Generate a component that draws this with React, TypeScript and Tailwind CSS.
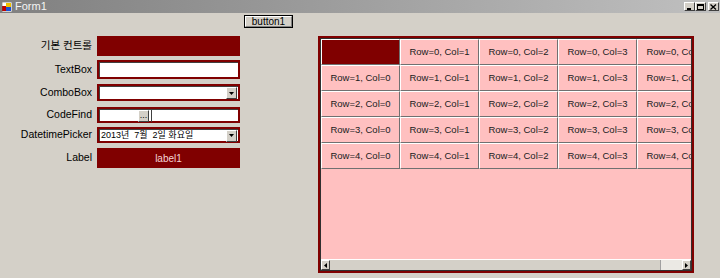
const font = "font-['Liberation_Sans','Noto_Sans_CJK_KR',sans-serif]"

const cols = [0, 1, 2, 3, 4]
const rows = [0, 1, 2, 3, 4]

function FormIcon() {
  return (
    <svg width="10" height="10" viewBox="0 0 10 10">
      <rect x="0" y="0" width="10" height="10" fill="#ffffff" />
      <rect x="0" y="4" width="4" height="5" fill="#c00000" />
      <rect x="4" y="1" width="5" height="4" fill="#f0c000" />
      <rect x="4" y="5" width="5" height="4" fill="#2050d0" />
      <rect x="0" y="0" width="10" height="10" fill="none" stroke="#606060" strokeWidth="0.6" />
    </svg>
  )
}

function CaptionButton({ kind }: { kind: 'min' | 'max' | 'close' }) {
  return (
    <div className="w-[11px] h-[9px] bg-[#d4d0c8] border-t border-l border-t-white border-l-white border-r border-b border-r-[#404040] border-b-[#404040] flex items-center justify-center">
      <svg width="7" height="6" viewBox="0 0 7 6">
        {kind === 'min' && <rect x="1" y="4" width="4" height="2" fill="#000" />}
        {kind === 'max' && (
          <>
            <rect x="0.5" y="0.5" width="6" height="5" fill="none" stroke="#000" />
            <rect x="0" y="0" width="7" height="2" fill="#000" />
          </>
        )}
        {kind === 'close' && <path d="M0.5 0.5 L6 5.5 M6 0.5 L0.5 5.5" stroke="#000" strokeWidth="1.3" />}
      </svg>
    </div>
  )
}

function DropButton() {
  return (
    <div className="w-[11px] h-[12px] bg-[#d4d0c8] border-t border-l border-t-white border-l-white border-r border-b border-r-[#404040] border-b-[#404040] flex items-center justify-center">
      <svg width="5" height="3" viewBox="0 0 5 3">
        <path d="M0 0 L5 0 L2.5 3 Z" fill="#000" />
      </svg>
    </div>
  )
}

function Field({ children, h }: { children?: React.ReactNode; h: string }) {
  return (
    <div className={`w-[143px] ${h} border-2 border-[#800000] bg-white`}>
      <div className="w-full h-full border-t border-l border-t-[#404040] border-l-[#404040] flex items-center">{children}</div>
    </div>
  )
}

function Label({ text, h, mt }: { text: string; h: string; mt: string }) {
  return (
    <div className={`flex items-center ${mt}`}>
      <div className={`w-[92px] ${h} flex items-center justify-end text-[10.5px] text-black`}>{text}</div>
    </div>
  )
}

export default function App() {
  return (
    <div className={`w-[720px] h-[278px] bg-[#d4d0c8] flex flex-col overflow-hidden ${font}`}>
      <div className="h-[13px] bg-gradient-to-r from-[#808080] to-[#c0c0c0] flex items-center pl-[2px] pr-[1px]">
        <FormIcon />
        <span className="ml-[3px] text-[11px] leading-none text-[#f4f4f4]">Form1</span>
        <div className="ml-auto flex items-center">
          <CaptionButton kind="min" />
          <CaptionButton kind="max" />
          <div className="w-[2px]" />
          <CaptionButton kind="close" />
        </div>
      </div>

      <div className="pl-[244px] pt-[2px]">
        <div className="w-[49px] h-[13px] border border-black bg-[#d4d0c8]">
          <div className="w-full h-full border-t border-l border-t-white border-l-white border-r border-b border-r-[#808080] border-b-[#808080] flex items-center justify-center text-[10px] leading-none text-black">
            button1
          </div>
        </div>
      </div>

      <div className="flex mt-[8px]">
        <div className="flex">
          <div className="flex flex-col">
            <Label text="기본 컨트롤" h="h-[20px]" mt="mt-0" />
            <Label text="TextBox" h="h-[19px]" mt="mt-[4px]" />
            <Label text="ComboBox" h="h-[17px]" mt="mt-[5px]" />
            <Label text="CodeFind" h="h-[16px]" mt="mt-[6px]" />
            <Label text="DatetimePicker" h="h-[16px]" mt="mt-[4px]" />
            <Label text="Label" h="h-[20px]" mt="mt-[5px]" />
          </div>
          <div className="ml-[5px] flex flex-col">
            <div className="w-[143px] h-[20px] bg-[#800000]" />
            <div className="mt-[4px]">
              <Field h="h-[19px]" />
            </div>
            <div className="mt-[5px]">
              <Field h="h-[17px]">
                <div className="ml-auto mr-[1px]">
                  <DropButton />
                </div>
              </Field>
            </div>
            <div className="mt-[6px]">
              <Field h="h-[16px]">
                <div className="ml-[38px] w-[11px] h-[12px] bg-[#d4d0c8] border-t border-l border-t-white border-l-white border-r border-b border-r-[#404040] border-b-[#404040] flex items-center justify-center text-[9px] leading-none text-black">
                  ...
                </div>
                <div className="ml-[2px] w-[1px] h-[12px] bg-[#404040]" />
              </Field>
            </div>
            <div className="mt-[4px]">
              <Field h="h-[16px]">
                <span className="ml-[1px] text-[9px] leading-none text-black whitespace-pre">2013년  7월  2일 화요일</span>
                <div className="ml-auto mr-[1px]">
                  <DropButton />
                </div>
              </Field>
            </div>
            <div className="mt-[5px] w-[143px] h-[20px] bg-[#800000] flex items-center justify-center text-[10px] text-[#f4d4d4]">
              label1
            </div>
          </div>
        </div>

        <div className="ml-[78px] w-[376px] h-[237px] border-2 border-[#800000] bg-[#800000]">
          <div className="w-full h-full border border-[#303030] bg-[#ffc0c0] flex flex-col overflow-hidden">
            <div className="flex-1 overflow-hidden">
              <div className="flex flex-col w-max">
                {rows.map((r) => (
                  <div key={r} className="flex">
                    {cols.map((c) => (
                      <div
                        key={c}
                        className={`w-[79px] h-[26px] shrink-0 border-t border-l border-t-white border-l-white border-r border-b border-r-[#707070] border-b-[#707070] flex items-center justify-center text-[9.5px] text-[#202020] whitespace-nowrap ${
                          r === 0 && c === 0 ? 'bg-[#800000]' : 'bg-[#ffc0c0]'
                        }`}
                      >
                        {r === 0 && c === 0 ? '' : `Row=${r}, Col=${c}`}
                      </div>
                    ))}
                  </div>
                ))}
              </div>
            </div>
            <div className="h-[11px] flex bg-[#d4d0c8] border-t border-t-white">
              <div className="w-[9px] h-full border-t border-l border-t-white border-l-white border-r border-b border-r-[#404040] border-b-[#404040] flex items-center justify-center">
                <svg width="3" height="5" viewBox="0 0 3 5">
                  <path d="M3 0 L3 5 L0 2.5 Z" fill="#000" />
                </svg>
              </div>
              <div className="flex-1" />
              <div className="w-[22px] h-full bg-[#ebe9e4] border-l border-l-[#a0a0a0]" />
              <div className="w-[9px] h-full border-t border-l border-t-white border-l-white border-r border-b border-r-[#404040] border-b-[#404040] flex items-center justify-center">
                <svg width="3" height="5" viewBox="0 0 3 5">
                  <path d="M0 0 L0 5 L3 2.5 Z" fill="#000" />
                </svg>
              </div>
            </div>
          </div>
        </div>
      </div>
    </div>
  )
}
